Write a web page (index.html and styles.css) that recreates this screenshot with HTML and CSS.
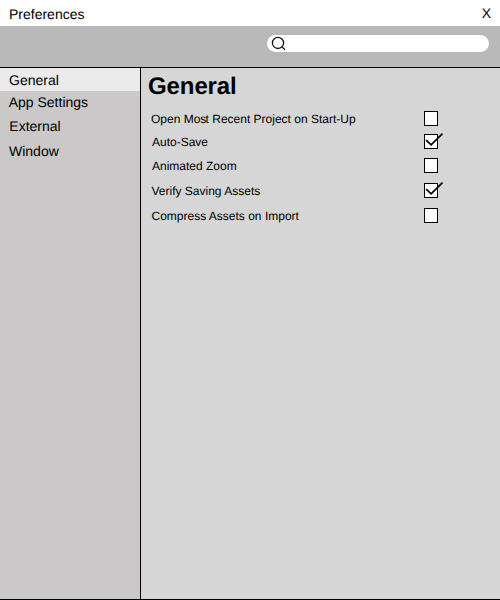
FILE: index.html
```html
<!DOCTYPE html>
<html lang="en">
<head>
<meta charset="utf-8">
<title>Preferences</title>
<link rel="stylesheet" href="styles.css">
</head>
<body>
<div class="window">
  <header class="titlebar"><span>Preferences</span><span class="close">X</span></header>
  <div class="toolbar">
    <div class="search">
      <svg width="15" height="15" viewBox="0 0 15 15" fill="none" stroke="#111" stroke-width="1.3"><circle cx="7" cy="6.9" r="5.6"/><path d="M10.4 10.4 14 13.8"/></svg>
    </div>
  </div>
  <div class="main">
    <nav class="sidebar">
      <div class="nav selected">General</div>
      <div class="nav app">App Settings</div>
      <div class="nav external">External</div>
      <div class="nav last">Window</div>
    </nav>
    <section class="content">
      <h1>General</h1>
      <div class="row"><span class="label">Open Mo<span class="tight">s</span>t Recent Project on Start-Up</span><span class="box"></span></div>
      <div class="row auto"><span class="label">Auto-Save</span><span class="box"><svg class="check" width="20" height="15" viewBox="0 0 20 15"><path d="M2.2 8.2 7.1 12.8 18.5 1.7"/></svg></span></div>
      <div class="row zoom"><span class="label">Animated Zoom</span><span class="box"></span></div>
      <div class="row wide verify"><span class="label">Verify Saving Assets</span><span class="box"><svg class="check" width="20" height="15" viewBox="0 0 20 15"><path d="M2.2 8.2 7.1 12.8 18.5 1.7"/></svg></span></div>
      <div class="row wide compress"><span class="label">Compress Assets on Import</span><span class="box"></span></div>
    </section>
  </div>
</div>
</body>
</html>
```
FILE: styles.css
```css
* { box-sizing: border-box; }
body { margin: 0; font-family: "Liberation Sans", Arial, sans-serif; font-size: 14px; color: #000; text-rendering: geometricPrecision; }
.window { width: 500px; height: 600px; display: flex; flex-direction: column; border-bottom: 1px solid #000; background: #d6d6d6; }
.titlebar { height: 26px; padding: 2px 9px 0; display: flex; justify-content: space-between; align-items: center; background: #fff; }
.close { padding-bottom: 2px; }
.toolbar { height: 42px; padding: 9px 11px 0 0; display: flex; justify-content: flex-end; background: #b9b9b9; border-bottom: 1px solid #000; }
.search { width: 222px; height: 17px; padding: 1px 0 0 4px; border-radius: 9px; background: #fff; }
.search svg { display: block; }
.main { flex: 1; display: flex; }
.sidebar { width: 141px; background: #cac8c9; border-right: 1px solid #000; }
.nav { height: 24px; line-height: 24px; padding-left: 9px; }
.selected { height: 23px; background: #ebebeb; }
.app { height: 23px; line-height: 23px; padding-left: 8.7px; }
.external { padding-left: 9.3px; }
.last { margin-top: 1px; }
.content { flex: 1; padding: 4px 62px 0 7px; }
h1 { margin: 0; height: 39px; font-size: 24px; line-height: 30px; letter-spacing: -0.1px; }
.row { display: flex; justify-content: space-between; height: 15px; padding-left: 3px; font-size: 12px; line-height: 17px; }
.label { white-space: nowrap; }
.tight { letter-spacing: -0.8px; }
.auto { margin-top: 8px; padding-left: 4px; }
.zoom { margin-top: 9px; padding-left: 4px; }
.wide { margin-top: 10px; }
.verify { padding-left: 3.5px; }
.compress { padding-left: 3.5px; }
.box { position: relative; width: 14px; height: 15px; background: #fff; border: 1px solid #000; }
.check { position: absolute; left: -1px; top: -3px; fill: none; stroke: #000; stroke-width: 1.7; }
```
